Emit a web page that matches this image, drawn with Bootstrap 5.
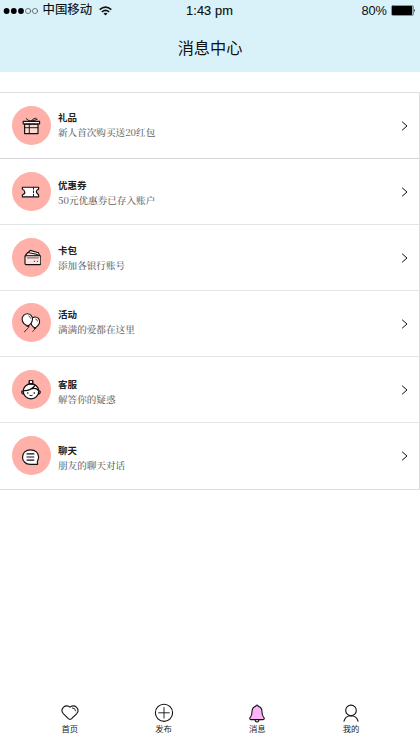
<!DOCTYPE html>
<html lang="zh-CN">
<head>
<meta charset="utf-8">
<meta name="viewport" content="width=device-width, initial-scale=1">
<title>消息中心</title>
<link href="https://cdn.jsdelivr.net/npm/bootstrap@5.3.0/dist/css/bootstrap.min.css" rel="stylesheet">
<style>
  body { font-family: "Liberation Sans", "Noto Sans CJK SC", sans-serif; color: #111; background: #fff; }
  .screen { height: 747px; width: 420px; }
  .top-area { height: 72px; background: #d9f2f9; }
  .status { height: 20px; display: grid; grid-template-columns: 1fr auto 1fr; padding: 0 4px 0 3px; font-size: 12.8px; line-height: 21px; color: #0b0f10; }
  .carrier { font-size: 12.4px; margin-left: 4.5px; margin-right: 7px; -webkit-text-stroke: .15px #0b0f10; }
  .clock { letter-spacing: .1px; -webkit-text-stroke: .15px #0b0f10; }
  .page-title { font-size: 16.2px; line-height: 24px; padding-top: 16px; font-weight: 400; }
  .messages { margin-top: 20px; border: 1px solid #dedede; border-left: 0; }
  .message { height: 66px; padding: 0 10px 0 12px; border-bottom: 1px solid #e4e4e4; color: inherit; }
  .message:first-child { border-bottom-color: #d4d4d4; }
  .message:last-child { border-bottom: 0; }
  .disc { width: 39px; height: 39px; padding-right: 1px; background: #ffb1a9; margin-top: 13px; }
  .words { margin-left: 7px; padding-top: 17px; line-height: 15px; }
  .m-title { font-size: 9.5px; font-weight: 700; color: #222; }
  .m-text { font-family: "Noto Serif CJK SC", "Liberation Serif", "Noto Sans CJK SC", serif; font-size: 9.6px; font-weight: 500; color: #666; }
  .shift-1 { padding-top: 19px; }
  .shift-2 { padding-top: 18px; }
  .shift-3 { padding-top: 16px; }
  .shift-4 { padding-top: 20px; }
  .raised { margin-top: 12px; }
  .chevron { margin-top: 28px; }
  .tabs { padding: 0 22px 0 23px; height: 44px; }
  .tab-item { font-size: 8.4px; line-height: 13px; color: #222; }
  svg { display: block; fill: none; stroke: #111; stroke-linecap: round; stroke-linejoin: round; }
  .wifi { stroke-linecap: butt; }
</style>
<script src="https://cdn.jsdelivr.net/npm/bootstrap@5.3.0/dist/js/bootstrap.bundle.min.js"></script>
</head>
<body>
<div class="screen d-flex flex-column overflow-hidden">
  <header class="top-area">
    <div class="status">
      <div class="d-flex align-items-center">
        <svg width="35" height="8" viewBox="0 0 35 8"><g fill="#000" stroke="none"><circle cx="3.6" cy="4" r="2.9"/><circle cx="10.8" cy="4" r="2.9"/><circle cx="18" cy="4" r="2.9"/></g><g stroke="#333" stroke-width=".6"><circle cx="25.1" cy="4" r="2.6"/><circle cx="32" cy="4" r="2.6"/></g></svg>
        <span class="carrier">中国移动</span>
        <svg class="wifi" width="13" height="10" viewBox="0 0 13 10" stroke-width="1.6"><path d="M.7 3.7Q6.5-1.6 12.3 3.7M2.8 6Q6.5 2.6 10.2 6"/><path d="M4.5 7.5Q6.5 5.8 8.5 7.5L6.5 9.6Z" fill="#111" stroke="none"/></svg>
      </div>
      <span class="clock">1:43 pm</span>
      <div class="d-flex align-items-center justify-content-end">
        <span class="me-1">80%</span>
        <svg width="25" height="11" viewBox="0 0 25 11"><rect x=".5" y=".5" width="22" height="10" rx="1.3" stroke="#555" stroke-width=".6"/><rect x="1" y="1" width="20.3" height="9" rx=".7" fill="#000" stroke="none"/><path d="M23.3 3.7Q25 5.5 23.3 7.3Z" fill="#111" stroke="none"/></svg>
      </div>
    </div>
    <h1 class="page-title text-center m-0">消息中心</h1>
  </header>

  <main class="messages">
    <a class="message d-flex text-decoration-none" href="#">
      <div class="disc rounded-circle d-flex align-items-center justify-content-center">
        <svg width="20" height="20" viewBox="0 0 20 20" stroke-width="1.15"><path fill="#ffd9d4" d="M3.6 8.2H17V17.6H3.6Z"/><path fill="#fff" d="M2.2 5.3H18.6V7.8H2.2Z"/><path d="M8.3 8V17.5M3.6 11.7H17M10.3 5.1 7.8 4.6 5.2 2.6M10.3 5.1 12.3 3 15 2.2M10.3 5.1 13.7 4.4 16.2 3.2" stroke-width=".95"/></svg>
      </div>
      <div class="words"><div class="m-title">礼品</div><div class="m-text">新人首次购买送20红包</div></div>
      <svg class="chevron ms-auto" width="8" height="10" viewBox="0 0 8 10" stroke-width="1"><path d="M1.4 1 6 5 1.4 9"/></svg>
    </a>
    <a class="message d-flex text-decoration-none" href="#">
      <div class="disc rounded-circle d-flex align-items-center justify-content-center">
        <svg width="20" height="20" viewBox="0 0 20 20" stroke-width="1.15"><path fill="#fff" d="M1.4 5.2H17.6V7.3Q15 8.3 15.4 10T17.6 12.7V14.9H1.4V12.7Q4.2 12 3.8 10T1.4 7.3Z"/><path d="M12.5 5.5V14.7" stroke-width=".95" stroke-dasharray="1.8 1.6"/></svg>
      </div>
      <div class="words shift-1"><div class="m-title">优惠券</div><div class="m-text">50元优惠券已存入账户</div></div>
      <svg class="chevron ms-auto" width="8" height="10" viewBox="0 0 8 10" stroke-width="1"><path d="M1.4 1 6 5 1.4 9"/></svg>
    </a>
    <a class="message d-flex text-decoration-none" href="#">
      <div class="disc rounded-circle d-flex align-items-center justify-content-center">
        <svg width="20" height="20" viewBox="0 0 20 20" stroke-width="1.1"><path fill="#fff" d="M5 6.5 9.3 2.4 17.5 4.7 18.7 8Z"/><path fill="#ffe2df" d="M4 8 6.8 4.5 15.5 6.2 18 8Z"/><rect x="4" y="7.7" width="15.8" height="8.9" rx="1" fill="#ffe2df"/><path d="M6.3 9.9H17.4" stroke-width=".65"/><path d="M13.3 13.3H13.5M16.2 13.3H16.4" stroke-width="1"/></svg>
      </div>
      <div class="words shift-2"><div class="m-title">卡包</div><div class="m-text">添加各银行账号</div></div>
      <svg class="chevron ms-auto" width="8" height="10" viewBox="0 0 8 10" stroke-width="1"><path d="M1.4 1 6 5 1.4 9"/></svg>
    </a>
    <a class="message d-flex text-decoration-none" href="#">
      <div class="disc raised rounded-circle d-flex align-items-center justify-content-center">
        <svg width="20" height="20" viewBox="0 0 20 20" stroke-width="1.1"><path d="M6.8 12.3C10 15 5.5 15.3 3.6 18.8M14 15C14.5 17 12.5 16.7 11.8 18.3" stroke-width=".9"/><path fill="#fff" d="M14 4C16.9 3.9 18.7 6.2 18.6 8.9 18.3 11.8 16.2 13.7 14 14.9 11.8 13.7 10 12 9.8 9.2 9.6 6.2 11.2 4.2 14 4Z"/><path fill="#fff" d="M6.4.8C9.3.8 11.6 3 11.5 6.2 11.3 9.4 9 12.4 6.8 12.7 4 12.5 1.2 9.5 1.1 6.2 1.1 3 3.5.8 6.4.8Z"/><path d="M7.7 2.8Q9.2 3.3 9.5 5.1M14.7 6Q16.2 6.2 16.4 8" stroke-width=".7"/><path d="M6 13.3H7.6M13.3 15.3H14.7"/></svg>
      </div>
      <div class="words shift-3"><div class="m-title">活动</div><div class="m-text">满满的爱都在这里</div></div>
      <svg class="chevron ms-auto" width="8" height="10" viewBox="0 0 8 10" stroke-width="1"><path d="M1.4 1 6 5 1.4 9"/></svg>
    </a>
    <a class="message d-flex text-decoration-none" href="#">
      <div class="disc rounded-circle d-flex align-items-center justify-content-center">
        <svg width="20" height="20" viewBox="0 0 20 20" stroke-width="1.3"><path fill="#fff" d="M2.2 10.8Q.6 10.8 .8 12.3T2.8 14M17.8 10.8Q19.4 10.8 19.2 12.3T17.2 14"/><ellipse cx="10" cy="11.3" rx="7.8" ry="7.5" fill="#fff"/><circle cx="10" cy="1.9" r="1.9" fill="#fff"/><path d="M7.8 3.9H12.2M2.6 10.6C7 11 12 8.7 14.2 5.2M10.7 8.8Q15 7.6 17.5 10.5"/><path d="M6.7 13H6.8M13.2 13H13.3" stroke-width="1.6"/><path d="M8.7 15.4Q10 16.2 11.3 15.4" stroke-width=".9"/></svg>
      </div>
      <div class="words shift-4"><div class="m-title">客服</div><div class="m-text">解答你的疑惑</div></div>
      <svg class="chevron ms-auto" width="8" height="10" viewBox="0 0 8 10" stroke-width="1"><path d="M1.4 1 6 5 1.4 9"/></svg>
    </a>
    <a class="message d-flex text-decoration-none" href="#">
      <div class="disc rounded-circle d-flex align-items-center justify-content-center">
        <svg width="20" height="20" viewBox="0 0 20 20" stroke-width="1.15"><path fill="#fff" d="M16.6 18.3H9.2C4.6 18.3 1.5 15.3 1.5 11.2 1.5 7 4.8 3.8 9.4 3.8 14.4 3.8 17.6 7 17.6 11.1 17.6 13.2 16.9 14.4 16.3 15.5Z"/><path d="M6 7.9H12.9M6 11H12.9M6 14.1H12.9" stroke-width="1.15"/></svg>
      </div>
      <div class="words shift-4"><div class="m-title">聊天</div><div class="m-text">朋友的聊天对话</div></div>
      <svg class="chevron ms-auto" width="8" height="10" viewBox="0 0 8 10" stroke-width="1"><path d="M1.4 1 6 5 1.4 9"/></svg>
    </a>
  </main>

  <nav class="tabs d-flex mt-auto text-center">
    <div class="tab-item col-3 d-flex flex-column align-items-center">
      <svg width="20" height="20" viewBox="0 0 20 20" stroke-width="1.1"><path d="M10 4.2C8.5 2.6 5.5 2.3 3.6 4.1 1.6 6 1.6 8.7 3.5 10.8L8.4 15.6Q10 17 11.6 15.6L16.5 10.8C18.4 8.7 18.4 6 16.4 4.1 14.5 2.4 11.6 2.5 10 4.2Z"/><path d="M12.4 4.9Q15.3 4.7 15.6 7.8" stroke-width=".9"/></svg>
      <span>首页</span>
    </div>
    <div class="tab-item col-3 d-flex flex-column align-items-center">
      <svg width="20" height="20" viewBox="0 0 20 20" stroke-width="1.1"><circle cx="10" cy="9.8" r="8.6"/><path d="M10 4.5V15.1M4.7 9.8H15.3" stroke-width=".9"/></svg>
      <span>发布</span>
    </div>
    <div class="tab-item col-3 d-flex flex-column align-items-center">
      <svg width="20" height="20" viewBox="0 0 20 20" stroke-width="1.1"><path fill="#fff" d="M8 16.5Q8.2 19 10 19T12 16.5"/><path fill="#fbb4fa" d="M8.9 3.2C8.6 1.8 11.4 1.8 11.1 3.2 14.2 4 15 6.2 15 8.8 15 12.3 15.5 13.3 16.7 14.3 17.8 15.3 17.2 16.6 16 16.6H4C2.8 16.6 2.2 15.3 3.3 14.3 4.5 13.3 5 12.3 5 8.8 5 6.2 5.8 4 8.9 3.2Z"/></svg>
      <span>消息</span>
    </div>
    <div class="tab-item col-3 d-flex flex-column align-items-center">
      <svg width="20" height="20" viewBox="0 0 20 20" stroke-width="1.1"><circle cx="10" cy="7.4" r="5.3"/><path d="M3 18.2C3.7 15 6 12.8 10 12.7 14 12.8 16.3 15 17 18.2"/></svg>
      <span>我的</span>
    </div>
  </nav>
</div>
</body>
</html>
